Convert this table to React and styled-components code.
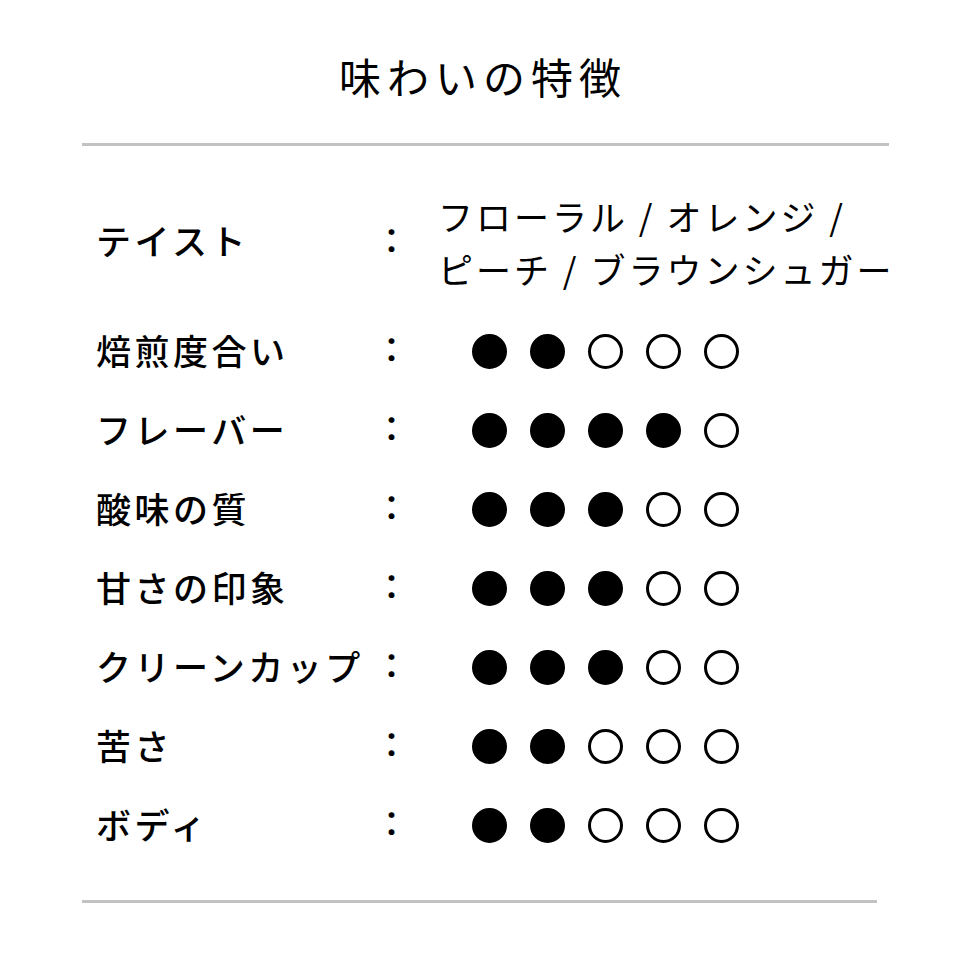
import React from 'react'
import styled, { createGlobalStyle } from 'styled-components'

const GlobalStyle = createGlobalStyle`
	html, body {
		margin: 0;
		padding: 0;
		background: #fff;
	}
	body {
		font-family: 'Noto Sans CJK JP', 'Noto Sans', sans-serif;
		color: #000;
	}
`

const Page = styled.main`
	width: 960px;
	height: 960px;
	background: #fff;
	overflow: hidden;
	padding-top: 48px;
	box-sizing: border-box;
`

const Title = styled.h1`
	margin: 0;
	font-size: 42px;
	line-height: 56px;
	font-weight: 400;
	letter-spacing: 6px;
	text-align: center;
	padding-left: 6px;
`

const Rule = styled.hr`
	margin: ${(props) => props.$gap} 0 0 82px;
	width: ${(props) => props.$width}px;
	height: 3px;
	border: 0;
	background: #c2c2c2;
`

const List = styled.dl`
	margin: 26px 0 0;
	padding-left: 96px;
	display: grid;
	grid-template-columns: 278px 67px 1fr;
	align-items: center;
`

const Label = styled.dt`
	font-size: 35px;
	font-weight: 500;
	letter-spacing: 3.5px;
	line-height: 43px;
	white-space: nowrap;
	height: ${(props) => props.$h}px;
	display: flex;
	align-items: center;
	padding-bottom: 5px;
	box-sizing: border-box;
`

const Colon = styled.span`
	font-size: 35px;
	font-weight: 500;
	line-height: 43px;
	margin-top: -8px;
`

const Value = styled.dd`
	margin: 0;
	height: ${(props) => props.$h}px;
	display: flex;
	align-items: center;
`

const Taste = styled.p`
	margin: 0 0 0 -3px;
	font-size: 35px;
	font-weight: 400;
	letter-spacing: 3px;
	line-height: 53px;
	white-space: nowrap;
`

const Dots = styled.div`
	display: flex;
	gap: 23px;
	margin-left: 31px;
`

const Dot = styled.span`
	width: 35px;
	height: 35px;
	box-sizing: border-box;
	border-radius: 50%;
	border: 3.5px solid #000;
	background: ${(props) => (props.$filled ? '#000' : 'transparent')};
`

const ratings = [
	['焙煎度合い', 2],
	['フレーバー', 4],
	['酸味の質', 3],
	['甘さの印象', 3],
	['クリーンカップ', 3],
	['苦さ', 2],
	['ボディ', 2],
]

export default function App() {
	return (
		<Page>
			<GlobalStyle />
			<Title>味わいの特徴</Title>
			<Rule $gap="39px" $width={807} />
			<List>
				<Label $h={140}>テイスト</Label>
				<Colon>：</Colon>
				<Value $h={140}>
					<Taste>
						フローラル / オレンジ /
						<br />
						ピーチ / ブラウンシュガー
					</Taste>
				</Value>
				{ratings.map(([name, level]) => (
					<React.Fragment key={name}>
						<Label $h={79}>{name}</Label>
						<Colon>：</Colon>
						<Value $h={79}>
							<Dots>
								{[1, 2, 3, 4, 5].map((i) => (
									<Dot key={i} $filled={i <= level} />
								))}
							</Dots>
						</Value>
					</React.Fragment>
				))}
			</List>
			<Rule $gap="35px" $width={795} />
		</Page>
	)
}
